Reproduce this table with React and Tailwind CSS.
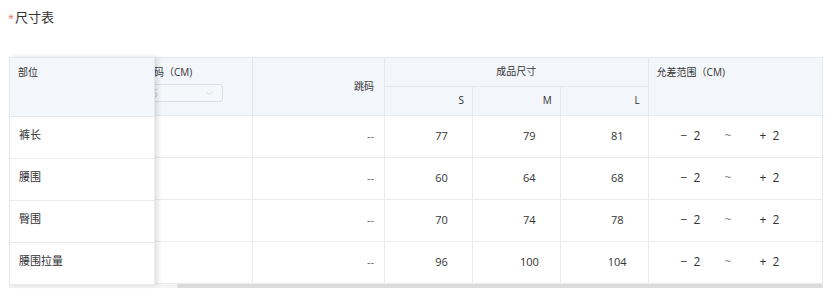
import React from 'react';
import { ChevronDown } from 'lucide-react';

const rows = [
  { name: '裤长', s: 77, m: 79, l: 81 },
  { name: '腰围', s: 60, m: 64, l: 68 },
  { name: '臀围', s: 70, m: 74, l: 78 },
  { name: '腰围拉量', s: 96, m: 100, l: 104 },
];

const font = { fontFamily: '"Open Sans", "Noto Sans CJK SC", sans-serif' };

const App = () => {
  return (
    <div className="w-[833px] h-[300px] bg-white text-[#333]" style={font}>
      {/* Title */}
      <div className="flex items-center h-[36px] pl-[8px] text-[13px]">
        <span className="text-[#f56c6c] text-[11px] mr-[1px]">*</span>
        <span>尺寸表</span>
      </div>

      <div className="relative ml-[9px] mt-[21px] w-[814px]">
        {/* Scrolling table */}
        <div className="overflow-hidden border-t border-r border-[#e4e7ec]">
          <table className="ml-[127px] border-collapse table-fixed text-[11px]">
            <colgroup>
              <col className="w-[117px]" />
              <col className="w-[132px]" />
              <col className="w-[88px]" />
              <col className="w-[88px]" />
              <col className="w-[88px]" />
              <col className="w-[174px]" />
            </colgroup>
            <thead className="bg-[#f3f6fa] text-[10px]">
              <tr className="h-[28px]">
                <th rowSpan={2} className="align-top text-left font-normal border-r border-b border-[#e4e7ec] pl-[8px] pt-[7px]">
                  <div>尺码（CM)</div>
                  <div className="mt-[4px] flex items-center justify-between w-[79px] h-[18px] px-[7px] border border-[#dcdfe6] rounded-[3px] bg-[#f5f7fa] text-[#b8bcc4]">
                    <span>S</span>
                    <ChevronDown size={11} strokeWidth={1.5} className="text-[#c0c4cc]" />
                  </div>
                </th>
                <th rowSpan={2} className="text-right font-normal border-r border-b border-[#e4e7ec] pr-[10px]">跳码</th>
                <th colSpan={3} className="font-normal border-r border-b border-[#e4e7ec]">成品尺寸</th>
                <th rowSpan={2} className="align-top text-left font-normal border-b border-[#e4e7ec] pl-[8px] pt-[7px]">允差范围（CM)</th>
              </tr>
              <tr className="h-[29px]">
                <th className="text-right font-normal border-r border-b border-[#e4e7ec] pr-[8px]">S</th>
                <th className="text-right font-normal border-r border-b border-[#e4e7ec] pr-[8px]">M</th>
                <th className="text-right font-normal border-r border-b border-[#e4e7ec] pr-[8px]">L</th>
              </tr>
            </thead>
            <tbody>
              {rows.map((r) => (
                <tr key={r.name} className="h-[42px]">
                  <td className="border-r border-b border-[#e9ebef]"></td>
                  <td className="text-right pr-[10px] border-r border-b border-[#e9ebef] text-[#666]">--</td>
                  <td className="text-center pl-[26px] border-r border-b border-[#e9ebef]">{r.s}</td>
                  <td className="text-center pl-[26px] border-r border-b border-[#e9ebef]">{r.m}</td>
                  <td className="text-center pl-[26px] border-r border-b border-[#e9ebef]">{r.l}</td>
                  <td className="border-b border-[#e9ebef]">
                    <div className="flex items-center pl-[32px] text-[12px]">
                      <span className="w-[44px] flex gap-[6px]"><span>−</span><span>2</span></span>
                      <span className="w-[35px] text-[#888]">~</span>
                      <span className="flex gap-[6px]"><span>+</span><span>2</span></span>
                    </div>
                  </td>
                </tr>
              ))}
            </tbody>
          </table>
        </div>

        {/* Horizontal scrollbar */}
        <div className="h-[4px] bg-[#f4f4f4] flex">
          <div className="ml-[168px] flex-1 bg-[#dcdcdc] rounded-[2px]"></div>
        </div>

        {/* Fixed left column */}
        <div className="absolute left-0 top-0 w-[146px] bg-white border-l border-t border-[#e4e7ec] shadow-[3px_0_5px_rgba(0,0,0,0.12)] text-[11px]">
          <div className="h-[59px] bg-[#f3f6fa] border-r border-b border-[#e4e7ec] pl-[8px] pt-[7px] text-[10px]">部位</div>
          {rows.map((r) => (
            <div key={r.name} className="h-[42px] pl-[9px] pt-[10px] border-r border-b border-[#e9ebef]">{r.name}</div>
          ))}
        </div>
      </div>
    </div>
  );
};

export default App;
